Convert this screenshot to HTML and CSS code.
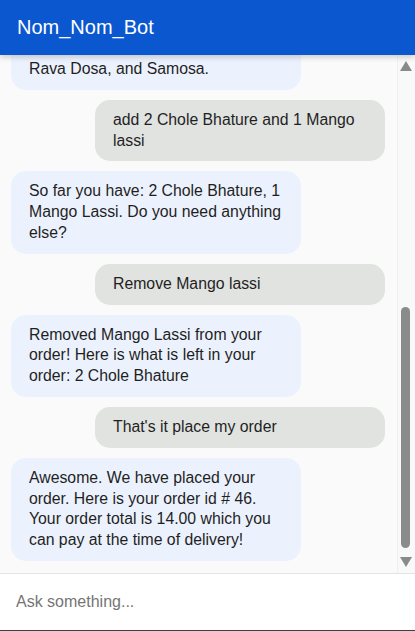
FILE: index.html
```html
<!DOCTYPE html>
<html lang="en">
<head>
<meta charset="utf-8">
<title>Nom_Nom_Bot</title>
<link rel="stylesheet" href="styles.css">
</head>
<body>
<div class="widget">
  <header class="topbar">
    <h1 class="title">Nom_Nom_Bot</h1>
  </header>
  <div class="chat-wrap">
    <main class="chat">
      <div class="messages">
        <div class="msg bot">Hi there! I am Nom_Nom_Bot, your food ordering assistant. You can say "New Order" or "Track Order".</div>
        <div class="msg user">New order</div>
        <div class="msg bot">Ok, starting a new order. You can say things like "I want two pizzas and one mango lassi". Make sure to specify a quantity for every food item! Also, we have only the following items on our menu: Pav Bhaji, Pizza, Mango Lassi, Vegetable Biryani,<br>Masala Dosa, Chole Bhature, Vada Pav,<br>Rava Dosa, and Samosa.</div>
        <div class="msg user">add 2 Chole Bhature and 1 Mango lassi</div>
        <div class="msg bot">So far you have: 2 Chole Bhature, 1 Mango Lassi. Do you need anything else?</div>
        <div class="msg user">Remove Mango lassi</div>
        <div class="msg bot">Removed Mango Lassi from your order! Here is what is left in your order: 2 Chole Bhature</div>
        <div class="msg user">That's it place my order</div>
        <div class="msg bot">Awesome. We have placed your order. Here is your order id # 46. Your order total is 14.00 which you can pay at the time of delivery!</div>
      </div>
    </main>
    <div class="scrollbar" aria-hidden="true">
      <svg class="arrow up" width="12" height="10" viewBox="0 0 12 10"><polygon points="6,0 12,10 0,10" fill="#8a8a8a"/></svg>
      <div class="thumb-track">
        <div class="thumb"></div>
      </div>
      <svg class="arrow down" width="12" height="10" viewBox="0 0 12 10"><polygon points="0,0 12,0 6,10" fill="#8a8a8a"/></svg>
    </div>
  </div>
  <footer class="composer">
    <input class="ask" type="text" placeholder="Ask something...">
  </footer>
</div>
</body>
</html>
```
FILE: styles.css
```css
* { box-sizing: border-box; }
html, body { margin: 0; padding: 0; height: 100%; }
body {
  font-family: "Liberation Sans", Arial, sans-serif;
  background: #ffffff;
  color: #1f1f1f;
}
.widget {
  display: flex;
  flex-direction: column;
  height: 631px;
  width: 415px;
  overflow: hidden;
}
.topbar {
  flex: none;
  height: 55px;
  background: #0b57d0;
  display: flex;
  align-items: center;
  padding-left: 17px;
  position: relative;
  z-index: 2;
  box-shadow: 0 2px 6px rgba(0, 0, 0, 0.2);
}
.title {
  margin: 0;
  color: #ffffff;
  font-size: 20px;
  font-weight: 400;
}
.chat-wrap {
  flex: 1;
  min-height: 0;
  position: relative;
  background: #fafafa;
}
.chat {
  height: 100%;
  overflow-y: scroll;
  scrollbar-width: none;
  display: flex;
  flex-direction: column-reverse;
}
.messages {
  display: flex;
  flex-direction: column;
  gap: 10px;
  padding: 10px 30px 12px 11px;
}
.msg {
  width: 290px;
  padding: 10px 18px;
  border-radius: 15px;
  font-size: 15.8px;
  line-height: 20.8px;
}
.bot {
  background: #ecf2fd;
  align-self: flex-start;
}
.user {
  background: #e1e3e1;
  align-self: flex-end;
}
.scrollbar {
  position: absolute;
  top: 0;
  right: 0;
  bottom: 0;
  width: 18px;
  background: #f9f9f9;
  border-left: 1px solid #f0f0f0;
  display: flex;
  flex-direction: column;
  align-items: center;
  padding: 6px 2px 6px 0;
}
.arrow {
  display: block;
  flex: none;
}
.thumb-track {
  flex: 1;
  width: 100%;
  display: flex;
  flex-direction: column;
  justify-content: flex-end;
  align-items: center;
  padding: 0 0 9px 0;
}
.thumb {
  width: 9px;
  height: 241px;
  border-radius: 5px;
  background: #8b8b8b;
}
.composer {
  flex: none;
  height: 58px;
  border-top: 1px solid #e4e4e4;
  border-bottom: 1px solid #3c4043;
  background: #ffffff;
  display: flex;
  align-items: center;
}
.ask {
  width: 100%;
  height: 100%;
  border: none;
  outline: none;
  background: transparent;
  padding: 0 16px;
  font-family: "Liberation Sans", Arial, sans-serif;
  font-size: 16px;
  color: #1f1f1f;
}
.ask::placeholder {
  color: #757575;
}
```
